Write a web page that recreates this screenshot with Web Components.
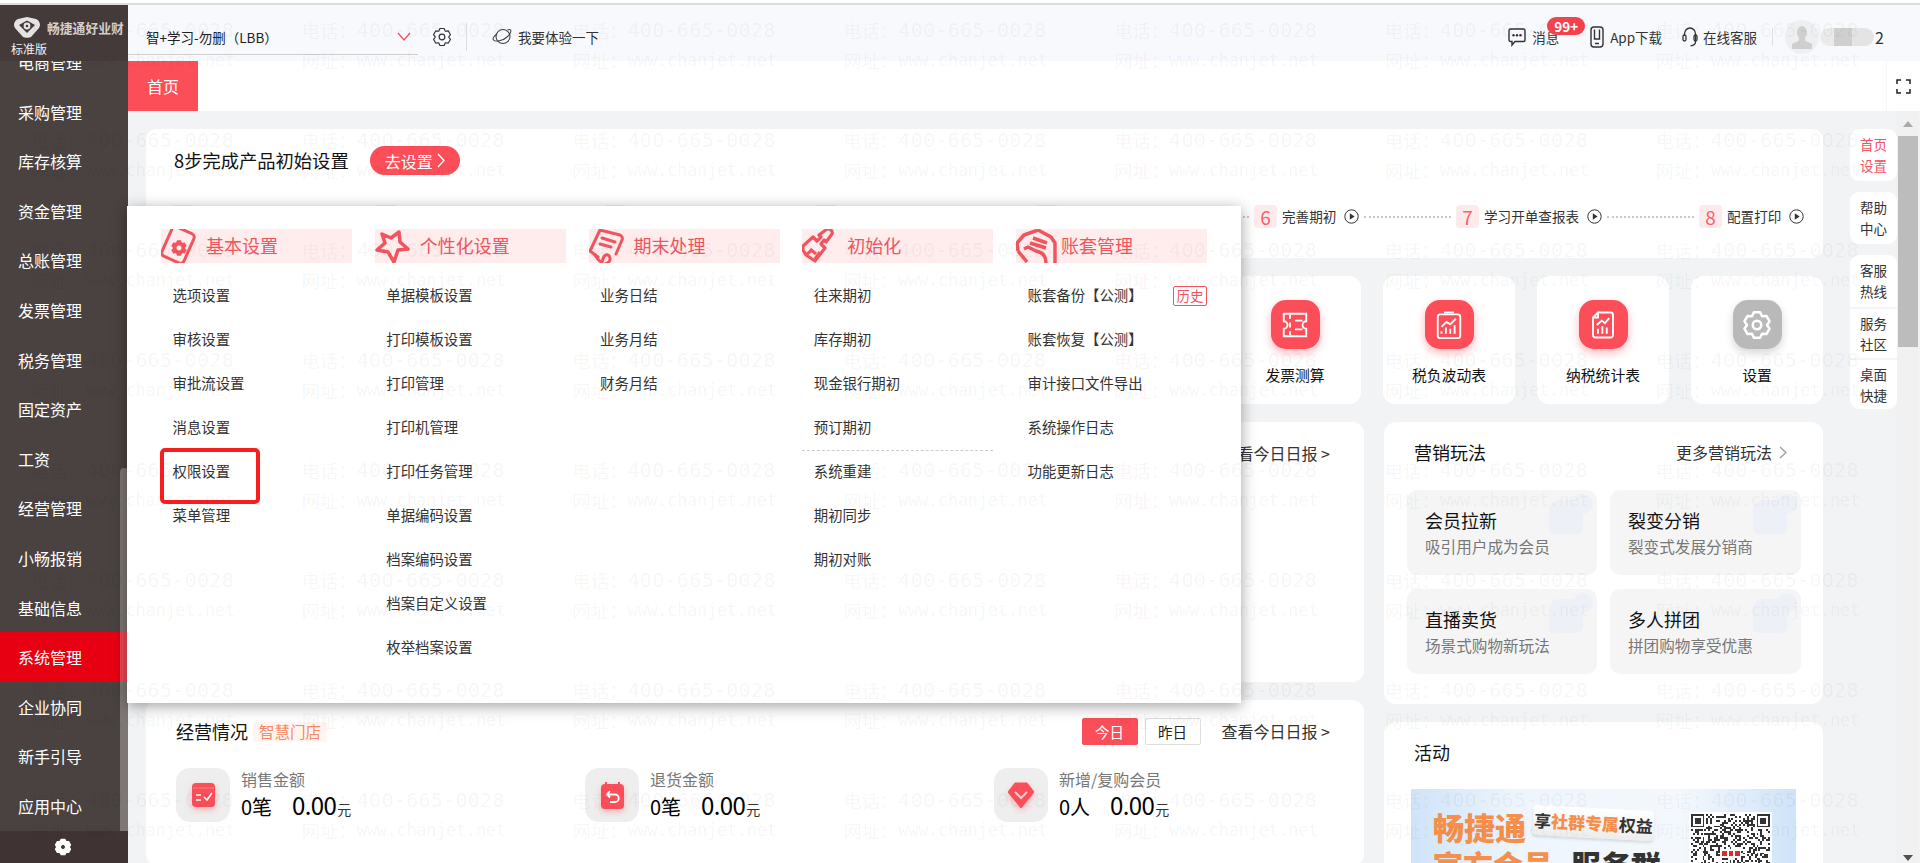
<!DOCTYPE html>
<html lang="zh-CN">
<head>
<meta charset="utf-8">
<title>畅捷通好业财</title>
<style>
  html, body { margin: 0; height: 863px; overflow: hidden; background: #f2f3f5; }
  body { font-family: "Noto Sans CJK SC", "Liberation Sans", sans-serif; color: #333; }
</style>
</head>
<body>
<app-shell></app-shell>

<script>
const RED = "#fb4e58";
const TITLE_RED = "#f0555f";

// six lobed cog, the same shape is used in the header, the tool card and the sidebar
function cogPath(cx, cy, outer, inner) {
  let d = "";
  for (let i = 0; i < 6; i++) {
    const a = (Math.PI / 3) * i - Math.PI / 2;
    const pts = [[outer, a - 0.24], [outer, a + 0.24], [inner, a + Math.PI / 6]];
    pts.forEach(([r, t], j) => {
      const x = (cx + r * Math.cos(t)).toFixed(2);
      const y = (cy + r * Math.sin(t)).toFixed(2);
      d += (i === 0 && j === 0 ? "M" : " L") + x + " " + y;
    });
  }
  return d + " Z";
}

function cogSvg(size, color, stroke) {
  return `<svg width="${size}" height="${size}" viewBox="0 0 24 24" fill="none" stroke="${color}"
    stroke-width="${stroke}" stroke-linejoin="round"><path d="${cogPath(12, 12, 10.5, 8)}"/><circle cx="12" cy="12" r="3.4"/></svg>`;
}

class SideNav extends HTMLElement {
  constructor() {
    super();
    this.attachShadow({ mode: "open" });
  }

  connectedCallback() {
    const items = ["电商管理", "采购管理", "库存核算", "资金管理", "总账管理", "发票管理", "税务管理", "固定资产",
      "工资", "经营管理", "小畅报销", "基础信息", "系统管理", "企业协同", "新手引导", "应用中心"];

    this.shadowRoot.innerHTML = `
      <style>
        :host { display: flex; flex-direction: column; width: 128px; height: 858px; background: #4a4240; color: #fff; position: relative; }
        .brand { height: 56px; background: #453a3a; position: relative; z-index: 1; padding: 12px 0 0 11px; box-sizing: border-box; flex: none; }
        .logo { display: flex; align-items: center; gap: 6px; margin-left: 2px; height: 20px; color: #d4d0d0; font-size: 12.8px; font-weight: 700; white-space: nowrap; }
        .edition { font-size: 12px; line-height: 14px; margin-top: 5px; color: #f2f2f2; }
        nav { flex: 1; overflow: hidden; position: relative; }
        ul { list-style: none; margin: -24px 0 0; padding: 0; }
        li { height: 49.6px; line-height: 51px; padding-left: 18px; font-size: 16px; }
        li.active { background: #e60012; }
        .thumb { position: absolute; right: 0; top: 407px; width: 8px; height: 363px; background: rgba(255,255,255,.28); border-radius: 4px 4px 0 0; }
        .foot { height: 32px; flex: none; background: #3f3333; display: flex; align-items: center; justify-content: center; padding-right: 2px; }
      </style>
      <div class="brand">
        <div class="logo">
          <svg width="28" height="21" viewBox="0 0 28 21" fill="#e6e3e3">
            <path d="M14 0 L23 2 C27 4 28 8 26 11 L18 20 C16 21 12 21 10 20 L2 11 C0 8 1 4 5 2 Z M14 3.500 L6 8 L14 16 L22 8 Z" fill-rule="evenodd"/>
            <circle cx="14" cy="9" r="3.400"/><circle cx="14" cy="9" r="1.300" fill="#453a3a"/>
          </svg>
          <span>畅捷通好业财</span>
        </div>
        <div class="edition">标准版</div>
      </div>
      <nav>
        <ul>${items.map(t => `<li class="${t === "系统管理" ? "active" : ""}">${t}</li>`).join("")}</ul>
        <div class="thumb"></div>
      </nav>
      <div class="foot">
        <svg width="18" height="18" viewBox="0 0 24 24" fill="#fff" fill-rule="evenodd" stroke="#fff" stroke-width="1.500" stroke-linejoin="round">
          <path d="${cogPath(12, 12, 10.500, 8.500)} M12 8.600 a3.400 3.400 0 1 0 .01 0 Z"/>
        </svg>
      </div>`;
  }
}

class TopBar extends HTMLElement {
  constructor() {
    super();
    this.attachShadow({ mode: "open" });
  }

  connectedCallback() {
    this.shadowRoot.innerHTML = `
      <style>
        :host { display: flex; align-items: center; height: 56px; box-sizing: border-box; padding-top: 8px; background: #f7f9fd; font-size: 13.5px; color: #333; }
        .select { width: 290px; height: 50px; box-sizing: border-box; align-self: flex-start; margin-top: -8px; padding: 14px 7px 0 18px; border-bottom: 1px solid #cfcfcf; display: flex; align-items: center; justify-content: space-between; color: #222; white-space: nowrap; }
        .gear { margin-left: 14px; display: flex; }
        .sep { width: 1px; height: 28px; background: #dcdde0; }
        .try { margin-left: 25px; margin-right: 6px; display: flex; }
        .right { margin-left: auto; display: flex; align-items: center; height: 100%; }
        .act { display: flex; align-items: center; gap: 6px; position: relative; white-space: nowrap; }
        .badge { position: absolute; left: 39px; top: -10px; height: 18px; width: 38px; border-radius: 9px; background: #f4434e; color: #fff; font-size: 13.500px; line-height: 18px; font-weight: 700; text-align: center; }
        .user { display: flex; align-items: center; margin-left: 12px; margin-right: 36px; }
        .avatar { width: 34px; height: 34px; border-radius: 50%; background: #eeeff1; display: flex; align-items: center; justify-content: center; }
        .blur { width: 54px; height: 18px; margin-left: 1px; border-radius: 9px; background: linear-gradient(90deg, #eaeaea 0 26%, #cfcfcf 26% 60%, #e4e4e4 60%); }
        .num { font-size: 16px; margin-left: 1px; }
      </style>
      <div class="select">
        <span>智+学习-勿删（LBB）</span>
        <svg width="14" height="9" viewBox="0 0 14 9" fill="none" stroke="${RED}" stroke-width="1.300"><path d="M1 1 L7 8 L13 1"/></svg>
      </div>
      <div class="gear">${cogSvg(20, "#333", 1.400)}</div>
      <div class="sep" style="margin-left:14px"></div>
      <div class="try">
        <svg width="20" height="18" viewBox="0 0 20 18" fill="none" stroke="#444" stroke-width="1.100">
          <circle cx="11" cy="8.500" r="7"/><path d="M5 6 C1.500 8 .5 11 1.500 12 C3 14 11 13 15 9 C18 6.500 19.500 3 18.500 2 C18 1.400 17 1.400 15.500 2"/>
        </svg>
      </div>
      <div>我要体验一下</div>
      <div class="right">
        <div class="act" style="margin-right:31px">
          <svg width="18" height="20" viewBox="0 0 18 20" fill="none" stroke="#333" stroke-width="1.400"><path d="M2.500 2 H15.500 A1.500 1.500 0 0 1 17 3.500 V13 A1.500 1.500 0 0 1 15.500 14.500 H7 L4 18 V14.500 H2.500 A1.500 1.500 0 0 1 1 13 V3.500 A1.500 1.500 0 0 1 2.500 2 Z"/><g fill="#333" stroke="none"><circle cx="5.500" cy="8.300" r="1.200"/><circle cx="9" cy="8.300" r="1.200"/><circle cx="12.500" cy="8.300" r="1.200"/></g></svg>
          <span>消息</span>
          <div class="badge">99+</div>
        </div>
        <div class="act" style="margin-right:20px">
          <svg width="14" height="22" viewBox="0 0 14 22" fill="none" stroke="#333" stroke-width="1.400"><rect x="1" y="1" width="12" height="20" rx="3"/><path d="M4.500 3.500 V13 H9.500 V3.500 M5 17.500 H9"/></svg>
          <span>App下载</span>
        </div>
        <div class="act" style="gap:5px;margin-right:15px">
          <svg width="16" height="22" viewBox="0 0 16 22" fill="none" stroke="#333" stroke-width="1.300"><path d="M2.500 10 V8 A5.500 6 0 0 1 13.500 8 V16 C13.500 18.500 11 19.500 8.500 19.800"/><rect x="1" y="9" width="3" height="6" rx="1.500"/><rect x="12" y="9" width="3" height="6" rx="1.500"/></svg>
          <span>在线客服</span>
        </div>
        <div class="sep" style="height:18px"></div>
        <div class="user">
          <div class="avatar">
            <svg width="22" height="24" viewBox="0 0 22 24" fill="#cfcfcf"><ellipse cx="11" cy="7.500" rx="5" ry="6.500"/><path d="M8 13 L7.500 16 L1 19 V24 H21 V19 L14.500 16 L14 13 Z"/></svg>
          </div>
          <div class="blur"></div>
          <div class="num">2</div>
        </div>
      </div>`;
  }
}

class TabStrip extends HTMLElement {
  constructor() {
    super();
    this.attachShadow({ mode: "open" });
  }

  connectedCallback() {
    this.shadowRoot.innerHTML = `
      <style>
        :host { display: flex; height: 50px; background: #fff; justify-content: space-between; }
        .tab { width: 70px; background: ${RED}; color: #fff; font-size: 16px; display: flex; align-items: center; justify-content: center; }
        .full { width: 34px; display: flex; align-items: center; justify-content: center; border-left: 1px solid #f7f7f7; box-sizing: border-box; }
      </style>
      <div class="tab">首页</div>
      <div class="full">
        <svg width="15" height="15" viewBox="0 0 15 15" fill="none" stroke="#222" stroke-width="1.500">
          <path d="M1 5 V1 H5 M10 1 H14 V5 M14 10 V14 H10 M5 14 H1 V10"/>
        </svg>
      </div>`;
  }
}

class SetupStep extends HTMLElement {
  constructor() {
    super();
    this.attachShadow({ mode: "open" });
  }

  connectedCallback() {
    const label = this.getAttribute("label");
    const play = `<svg class="play" width="15" height="15" viewBox="0 0 15 15" fill="none" stroke="#333" stroke-width="1">
      <circle cx="7.500" cy="7.500" r="6.700"/><path d="M5.800 4.300 L10.600 7.500 L5.800 10.700 Z" fill="#333" stroke="none"/></svg>`;

    this.shadowRoot.innerHTML = `
      <style>
        :host { display: flex; align-items: center; height: 23px; flex: none; }
        .no { width: 23px; height: 23px; flex: none; border-radius: 4px; background: #ffeaeb; color: #f9606a; font-size: 19px; line-height: 23px; text-align: center; }
        .text { margin: -2px 0 0 5px; font-size: 13.600px; color: #333; white-space: nowrap; }
        .play { margin-left: 8px; flex: none; }
        .dots { flex: 1; height: 0; margin: 0 5px; border-top: 2px dotted #c9c9c9; }
      </style>
      <div class="no">${this.getAttribute("no")}</div>
      ${label ? `<div class="text">${label}</div>${play}` : ""}
      ${this.hasAttribute("last") ? "" : `<div class="dots"></div>`}`;
  }
}

class SetupCard extends HTMLElement {
  constructor() {
    super();
    this.attachShadow({ mode: "open" });
  }

  connectedCallback() {
    this.shadowRoot.innerHTML = `
      <style>
        :host { display: block; height: 129px; box-sizing: border-box; background: #fff; border-radius: 10px; padding: 17px 20px 0 25px; }
        .head { display: flex; align-items: center; height: 29px; padding-left: 3px; font-size: 18.300px; color: #111; }
        .head > span { margin-top: -2px; }
        .go { margin-left: 21px; width: 90px; height: 29px; border-radius: 15px; background: ${RED}; color: #fff; font-size: 16px; display: flex; align-items: center; justify-content: center; gap: 4px; }
        .steps { display: flex; margin-top: 30px; }
      </style>
      <div class="head">
        <span>8步完成产品初始设置</span>
        <div class="go"><span>去设置</span>
          <svg width="8" height="15" viewBox="0 0 8 15" fill="none" stroke="#fff" stroke-width="1.400"><path d="M1 1 L7 7.500 L1 14"/></svg>
        </div>
      </div>
      <div class="steps">
        <setup-step no="1" style="width:204px"></setup-step>
        <setup-step no="2" style="width:229px"></setup-step>
        <setup-step no="3" style="width:211px"></setup-step>
        <setup-step no="4" style="width:220px"></setup-step>
        <setup-step no="5" style="width:219px"></setup-step>
        <setup-step no="6" label="完善期初" style="width:202px"></setup-step>
        <setup-step no="7" label="学习开单查报表" style="width:243px"></setup-step>
        <setup-step no="8" label="配置打印" last></setup-step>
      </div>`;
  }
}

const TOOL_ICONS = {
  ticket: `<path d="M3 3 H21 V9 A3 3 0 0 0 21 15 V21 H3 V15 A3 3 0 0 0 3 9 Z"/><path d="M8 4 V7 M8 10 V14 M8 17 V20 M12 8.500 H18 M12 15.500 H18" />`,
  board: `<rect x="3" y="3.500" width="18" height="19" rx="2"/><path d="M8 2 H16"/><path d="M6 19 V17 M9.500 19 V14 M13 19 V15 M16.500 19 V12 M6 13.500 L10 9.500 L13 11.500 L17.500 7"/>`,
  report: `<path d="M8 2 H18 A2 2 0 0 1 20 4 V20 A2 2 0 0 1 18 22 H6 A2 2 0 0 1 4 20 V6 Z M8 2 V6 H4"/><path d="M8 19 V15 M11.500 19 V13 M15 19 V14 M7 12 L11 8.500 L13.500 10.500 L17 6.500"/>`
};

class ToolCard extends HTMLElement {
  constructor() {
    super();
    this.attachShadow({ mode: "open" });
  }

  connectedCallback() {
    const icon = this.getAttribute("icon");
    const grey = icon === "cog";
    const glyph = grey
      ? cogSvg(30, "#fff", 2)
      : `<svg width="30" height="30" viewBox="0 0 24 24" fill="none" stroke="#fff" stroke-width="1.500">${TOOL_ICONS[icon]}</svg>`;

    this.shadowRoot.innerHTML = `
      <style>
        :host { display: block; width: 132px; height: 128px; flex: none; box-sizing: border-box; background: #fff; border-radius: 12px; padding-top: 24px; text-align: center; font-size: 14.800px; color: #111; }
        .ic { width: 49px; height: 49px; margin: 0 auto; border-radius: 15px; display: flex; align-items: center; justify-content: center;
          background: ${grey ? "#b9b9b9" : RED}; box-shadow: 0 4px 9px ${grey ? "rgba(0,0,0,.16)" : "rgba(251,78,88,.4)"}; }
        .lb { margin-top: 15px; line-height: 22px; }
      </style>
      <div class="ic">${glyph}</div>
      <div class="lb"><slot></slot></div>`;
  }
}

class ReportCard extends HTMLElement {
  constructor() {
    super();
    this.attachShadow({ mode: "open" });
  }

  connectedCallback() {
    this.shadowRoot.innerHTML = `
      <style>
        :host { display: block; height: 260px; background: #fff; border-radius: 12px; box-sizing: border-box; padding: 20px 34px 0 0; text-align: right; font-size: 16px; line-height: 22px; }
      </style>
      查看今日日报 &gt;`;
  }
}

const STAT_ICONS = {
  sale: `<svg width="23" height="24" viewBox="0 0 23 24"><path d="M4 0 H19 A4 4 0 0 1 23 4 V20 A4 4 0 0 1 19 24 H4 A4 4 0 0 1 0 20 V4 A4 4 0 0 1 4 0 Z" fill="${RED}"/><path d="M1 5 H22" stroke="#f8838a" stroke-width="1"/><path d="M4 12 H9 M4 17 H9 M12 14 L15 17 L20 10" stroke="#fff" stroke-width="1.600" fill="none"/></svg>`,
  back: `<svg width="23" height="27" viewBox="0 0 23 27"><path d="M5 0 V3 M18 0 V3" stroke="${RED}" stroke-width="2"/><rect y="2" width="23" height="25" rx="4" fill="${RED}"/><path d="M9 9 L6 12.500 L9 15.500 M6 12.500 H14 A3.500 3.500 0 0 1 14 20 H9" stroke="#fff" stroke-width="1.800" fill="none"/></svg>`,
  gem: `<svg width="26" height="26" viewBox="0 0 26 26"><path d="M7 1 H19 L26 10 L13 26 L0 10 Z" fill="${RED}" stroke="${RED}" stroke-linejoin="round"/><path d="M7 10 L13 16 L19 10" stroke="#fbd3d6" stroke-width="2" fill="none"/></svg>`
};

class StatItem extends HTMLElement {
  constructor() {
    super();
    this.attachShadow({ mode: "open" });
  }

  connectedCallback() {
    this.shadowRoot.innerHTML = `
      <style>
        :host { display: flex; gap: 11px; height: 54px; }
        .box { width: 54px; height: 54px; flex: none; border-radius: 14px; background: #eeeeee; display: flex; align-items: center; justify-content: center; }
        .box svg { filter: drop-shadow(0 3px 3px rgba(251,78,88,.35)); }
        .lb { font-size: 16px; line-height: 24px; color: #777; white-space: nowrap; margin-top: -1px; }
        .val { display: flex; align-items: baseline; line-height: 28px; color: #000; white-space: nowrap; }
        .cnt { font-size: 20px; width: 51px; }
        .amt { font-size: 24px; letter-spacing: -.6px; }
        .unit { font-size: 14px; color: #333; margin-left: 1px; }
      </style>
      <div class="box">${STAT_ICONS[this.getAttribute("icon")]}</div>
      <div>
        <div class="lb">${this.getAttribute("label")}</div>
        <div class="val"><span class="cnt">${this.getAttribute("count")}</span><span class="amt">0.00</span><span class="unit">元</span></div>
      </div>`;
  }
}

class BusinessCard extends HTMLElement {
  constructor() {
    super();
    this.attachShadow({ mode: "open" });
  }

  connectedCallback() {
    this.shadowRoot.innerHTML = `
      <style>
        :host { display: block; height: 166px; background: #fff; border-radius: 12px; box-sizing: border-box; padding: 18px 34px 0 30px; }
        .head { display: flex; align-items: center; height: 27px; }
        .title { font-size: 18px; color: #111; margin-top: -2px; }
        .tag { margin-left: 5px; height: 20px; line-height: 19px; padding: 0 6px; font-size: 15.500px; color: #f68a64; background: #fff4ef; border-radius: 2px; white-space: nowrap; }
        .btn { width: 56px; height: 27px; box-sizing: border-box; line-height: 25px; text-align: center; font-size: 14.500px; border-radius: 2px; border: 1px solid #dedede; color: #222; }
        .btn.on { margin-left: auto; background: ${RED}; border-color: ${RED}; color: #fff; margin-right: 7px; }
        .more { margin-left: 21px; font-size: 16px; color: #333; white-space: nowrap; margin-top: -1px; }
        .stats { display: grid; grid-template-columns: repeat(3, 409px); margin-top: 23px; }
      </style>
      <div class="head">
        <div class="title">经营情况</div>
        <div class="tag">智慧门店</div>
        <div class="btn on">今日</div>
        <div class="btn">昨日</div>
        <div class="more">查看今日日报 &gt;</div>
      </div>
      <div class="stats">
        <stat-item icon="sale" label="销售金额" count="0笔"></stat-item>
        <stat-item icon="back" label="退货金额" count="0笔"></stat-item>
        <stat-item icon="gem" label="新增/复购会员" count="0人"></stat-item>
      </div>`;
  }
}

class PromoTile extends HTMLElement {
  constructor() {
    super();
    this.attachShadow({ mode: "open" });
  }

  connectedCallback() {
    this.shadowRoot.innerHTML = `
      <style>
        :host { display: block; position: relative; height: 85px; box-sizing: border-box; padding: 18px 0 0 18px; background: #f5f5f5; border-radius: 10px; overflow: hidden; }
        .t { font-size: 18px; line-height: 24px; color: #111; position: relative; }
        .s { font-size: 15.600px; line-height: 24px; margin-top: 2px; color: #777; position: relative; white-space: nowrap; }
        svg { position: absolute; right: 2px; top: 2px; }
      </style>
      <svg width="46" height="44" viewBox="0 0 46 44" fill="#edf0f6">
        <path d="M10 8 H28 A6 6 0 0 1 34 14 V36 A6 6 0 0 1 28 42 H6 A6 6 0 0 1 0 36 V18 A10 10 0 0 1 10 8 Z"/><circle cx="34" cy="12" r="10"/>
      </svg>
      <div class="t">${this.getAttribute("title")}</div>
      <div class="s">${this.getAttribute("sub")}</div>`;
  }
}

class PromoCard extends HTMLElement {
  constructor() {
    super();
    this.attachShadow({ mode: "open" });
  }

  connectedCallback() {
    this.shadowRoot.innerHTML = `
      <style>
        :host { display: block; height: 282px; box-sizing: border-box; background: #fff; border-radius: 12px; padding: 18px 22px 0 23px; }
        .head { display: flex; justify-content: space-between; align-items: center; height: 24px; padding: 0 14px 0 7px; font-size: 18px; color: #111; }
        .more { display: flex; align-items: center; gap: 7px; font-size: 16px; color: #333; }
        .grid { display: grid; grid-template-columns: 190px 191px; gap: 14px 13px; margin-top: 26px; }
      </style>
      <div class="head">
        <span>营销玩法</span>
        <span class="more">更多营销玩法
          <svg width="8" height="13" viewBox="0 0 8 13" fill="none" stroke="#999" stroke-width="1.200"><path d="M1 1 L7 6.500 L1 12"/></svg>
        </span>
      </div>
      <div class="grid">
        <promo-tile title="会员拉新" sub="吸引用户成为会员"></promo-tile>
        <promo-tile title="裂变分销" sub="裂变式发展分销商"></promo-tile>
        <promo-tile title="直播卖货" sub="场景式购物新玩法"></promo-tile>
        <promo-tile title="多人拼团" sub="拼团购物享受优惠"></promo-tile>
      </div>`;
  }
}

class QrCode extends HTMLElement {
  constructor() {
    super();
    this.attachShadow({ mode: "open" });
  }

  connectedCallback() {
    const n = 41;
    let seed = 77;
    let cells = "";
    const inFinder = (x, y) => (x < 8 && y < 8) || (x > n - 9 && y < 8) || (x < 8 && y > n - 9);

    for (let y = 0; y < n; y++) {
      for (let x = 0; x < n; x++) {
        seed = (seed * 1103515245 + 12345) & 0x7fffffff;
        if (!inFinder(x, y) && (seed >> 16) % 5 < 2) cells += `<rect x="${x}" y="${y}" width="1" height="1"/>`;
      }
    }

    const finder = (x, y) => `<path d="M${x} ${y} h7 v7 h-7 Z M${x + 1} ${y + 1} v5 h5 v-5 Z" fill-rule="evenodd"/><rect x="${x + 2}" y="${y + 2}" width="3" height="3"/>`;

    this.shadowRoot.innerHTML = `
      <style>
        :host { display: block; width: 83px; height: 83px; background: #fff; padding: 2px; box-sizing: border-box; }
      </style>
      <svg width="79" height="79" viewBox="0 0 41 41" fill="#333" shape-rendering="crispEdges">
        ${cells}${finder(0, 0)}${finder(34, 0)}${finder(0, 34)}
        <rect x="15" y="18" width="11" height="5" fill="#fff"/>
        <g fill="#e02a2a"><rect x="16" y="19" width="2.500" height="3"/><rect x="19.500" y="19" width="2.500" height="3"/><rect x="23" y="19" width="2.500" height="3"/></g>
      </svg>`;
  }
}

class ActivityCard extends HTMLElement {
  constructor() {
    super();
    this.attachShadow({ mode: "open" });
  }

  connectedCallback() {
    this.shadowRoot.innerHTML = `
      <style>
        :host { display: block; height: 160px; box-sizing: border-box; background: #fff; border-radius: 12px 12px 0 0; padding: 18px 27px 0 27px; }
        .title { font-size: 18px; line-height: 24px; color: #111; padding-left: 3px; }
        .banner { display: flex; margin-top: 25px; height: 130px; box-sizing: border-box; padding: 19px 0 0 22px; background: linear-gradient(90deg, #cfe4f8 0, #eef5fc 28%, #f4f8fd 70%, #cfe3f9 100%); overflow: hidden; }
        .copy { width: 256px; flex: none; font-weight: 900; white-space: nowrap; }
        .brand { display: flex; font-size: 31px; line-height: 38px; color: #f58f4b; }
        .pill { margin: 0 0 0 7px; height: 30px; width: 121px; font-size: 17px; line-height: 30px; text-align: center; font-weight: 700; color: #333; background: linear-gradient(#fff, #ececec); border-radius: 4px; transform: rotate(3deg); box-shadow: 0 2px 3px rgba(0,0,0,.12); }
        .pill b { color: #f58f4b; }
        .sub { font-size: 30px; line-height: 36px; margin-top: 0; color: #f58f4b; }
        .sub i { font-style: normal; color: #333; margin-left: 18px; }
        qr-code { margin: 4px 0 0 0; }
      </style>
      <div class="title">活动</div>
      <div class="banner">
        <div class="copy">
          <div class="brand"><span>畅捷通</span><div class="pill">享<b>社群专属</b>权益</div></div>
          <div class="sub">官方会员<i>服务群</i></div>
        </div>
        <qr-code></qr-code>
      </div>`;
  }
}

class SideRail extends HTMLElement {
  constructor() {
    super();
    this.attachShadow({ mode: "open" });
  }

  connectedCallback() {
    this.shadowRoot.innerHTML = `
      <style>
        :host { display: flex; flex-direction: column; gap: 11px; width: 47px; flex: none; font-size: 13.500px; line-height: 21px; color: #333; text-align: center; position: relative; z-index: 1; }
        .sec { background: #fff; border-radius: 9px; overflow: hidden; }
        .it { height: 52px; box-sizing: border-box; padding-top: 5px; }
        .it + .it { height: 51px; padding-top: 4px; border-top: 2px solid #f5f5f5; }
        .on { color: ${TITLE_RED}; }
      </style>
      <div class="sec"><div class="it on">首页<br>设置</div></div>
      <div class="sec"><div class="it">帮助<br>中心</div></div>
      <div class="sec">
        <div class="it">客服<br>热线</div>
        <div class="it">服务<br>社区</div>
        <div class="it">桌面<br>快捷</div>
      </div>`;
  }
}

class PageScroll extends HTMLElement {
  constructor() {
    super();
    this.attachShadow({ mode: "open" });
  }

  connectedCallback() {
    this.shadowRoot.innerHTML = `
      <style>
        :host { display: flex; flex-direction: column; align-items: center; width: 23px; margin-left: -1px; flex: none; background: #f1f1f1; height: 100%; }
        .up, .down { width: 0; height: 0; border-left: 5.500px solid transparent; border-right: 5.500px solid transparent; }
        .up { margin-top: 10px; border-bottom: 6px solid #a9a9a9; }
        .thumb { width: 20px; height: 211px; background: #bcbcbc; margin-top: 9px; }
        .down { margin-top: auto; margin-bottom: 2px; border-top: 6px solid #505050; }
      </style>
      <div class="up"></div>
      <div class="thumb"></div>
      <div class="down"></div>`;
  }
}

const MENU = [
  {
    title: "基本设置",
    icon: `<rect x="5" y="0" width="24" height="32" rx="4" fill="none" stroke-width="3" transform="rotate(24 17 16)"/>
      <path fill-rule="evenodd" stroke="none" d="${cogPath(18, 19, 8, 6)} M18 16.500 a2.500 2.500 0 1 0 .01 0 Z"/>`,
    items: ["选项设置", "审核设置", "审批流设置", "消息设置", "权限设置", "菜单管理"]
  },
  {
    title: "个性化设置",
    icon: `<path fill="none" stroke-width="3.500" stroke-linejoin="round" d="M24 3 L25 13 L33 20 L23 21 L19 33 L13 23 L2 21 L10 14 L7 5 L16 9 Z"/>`,
    items: ["单据模板设置", "打印模板设置", "打印管理", "打印机管理", "打印任务管理", "单据编码设置", "档案编码设置", "档案自定义设置", "枚举档案设置"]
  },
  {
    title: "期末处理",
    icon: `<g fill="none" stroke-width="3" stroke-linejoin="round" stroke-linecap="round">
        <path d="M9 28 L1 22 L11 1 L31 6 C33 7 34 9 33 11 L27 25"/><path d="M13 9 L26 13 M11 15 L22 18"/>
        <path d="M6 26 C9 31 13 36 14 30 C15 25 20 24 21 29 C22 33 17 35 15 35"/></g>`,
    items: ["业务日结", "业务月结", "财务月结"]
  },
  {
    title: "初始化",
    icon: `<g fill="none" stroke-width="3.200" stroke-linejoin="round" transform="translate(0 -1)">
        <path d="M1 18 L11 9 L15 13 L19 9 L17 7 L25 1 C28 0 31 3 30 6 L24 14 L22 12 L19 16 L23 20 L13 33 L4 27 L1 22 Z"/>
        <path d="M8 21 L14 26 M5 26 L10 22 M13 31 L18 24"/></g>`,
    items: ["往来期初", "库存期初", "现金银行期初", "预订期初", "系统重建", "期初同步", "期初对账"],
    rule: 4
  },
  {
    title: "账套管理",
    icon: `<g fill="none" stroke-width="3.500" stroke-linejoin="round">
        <path d="M2 22 L1 14 L8 6 L22 1 L35 8 L39 14 V34"/><path d="M2 22 L11 33"/>
        <path d="M30 34 C30 26 26 23 20 22 L12 18 L8 20"/>
        <path d="M17 9 L31 14 M14 14 L30 19"/></g>`,
    items: ["账套备份【公测】", "账套恢复【公测】", "审计接口文件导出", "系统操作日志", "功能更新日志"],
    history: true
  }
];

class SettingMenu extends HTMLElement {
  constructor() {
    super();
    this.attachShadow({ mode: "open" });
  }

  connectedCallback() {
    const cols = MENU.map(col => `
      <section>
        <h3><svg width="42" height="34" viewBox="0 0 42 34" stroke="${TITLE_RED}" fill="${TITLE_RED}">${col.icon}</svg><span>${col.title}</span></h3>
        <ul>${col.items.map((t, i) => `
          <li class="${col.rule === i ? "rule" : ""}">${t}
            ${t === "权限设置" ? `<div class="mark"></div>` : ""}
            ${col.history && i === 0 ? `<div class="hist">历史</div>` : ""}
          </li>`).join("")}</ul>
      </section>`).join("");

    this.shadowRoot.innerHTML = `
      <style>
        :host { display: grid; grid-template-columns: repeat(5, 191px); column-gap: 22.750px; align-content: start; box-sizing: border-box; background: #fff; box-shadow: 0 3px 14px rgba(0,0,0,.38); padding: 23px 0 0 34px; }
        h3 { margin: 0; height: 34px; background: #ffecec; overflow: hidden; display: flex; align-items: center; font-weight: 400; font-size: 18px; color: ${TITLE_RED}; }
        h3 svg { flex: none; margin-right: 3px; }
        h3 span { margin-top: -2px; }
        ul { list-style: none; margin: 10px 0 0; padding: 0 0 0 11.500px; }
        li { height: 44px; line-height: 44px; font-size: 14.400px; color: #333; position: relative; white-space: nowrap; }
        li.rule::before { content: ""; position: absolute; left: -11.500px; right: 0; top: 1px; border-top: 1px dashed #ccc; }
        .mark { position: absolute; left: -13px; top: -1px; width: 100px; height: 56px; box-sizing: border-box; border: 4px solid #f81e1e; border-radius: 5px; }
        .hist { position: absolute; right: 0; top: 13px; width: 34px; height: 20px; box-sizing: border-box; line-height: 17px; text-align: center; font-size: 13.500px; color: ${TITLE_RED}; border: 1px solid ${TITLE_RED}; border-radius: 2px; }
      </style>
      ${cols}`;
  }
}

class WaterMark extends HTMLElement {
  constructor() {
    super();
    this.attachShadow({ mode: "open" });
  }

  connectedCallback() {
    let tiles = "";
    for (let r = 0; r < 8; r++) {
      for (let c = 0; c < 7; c++) {
        tiles += `<div class="tile"><div class="a"><span>电话：</span>400-665-0028</div><div class="b"><span>网址：</span>www.chanjet.net</div></div>`;
      }
    }
    this.shadowRoot.innerHTML = `
      <style>
        :host { position: absolute; inset: 0; pointer-events: none; overflow: hidden; z-index: 10; display: grid; grid-template-columns: repeat(7, 270.800px); grid-auto-rows: 110px; padding: 15px 0 0 31px; box-sizing: border-box; color: rgba(0,0,0,.05); white-space: nowrap; }
        .tile { height: 60px; }
        .a, .b { height: 30px; line-height: 30px; display: flex; font-family: "DejaVu Sans Mono", monospace; }
        span { font-family: "Noto Sans CJK SC", sans-serif; font-size: 18px; letter-spacing: .3px; }
        .a { font-size: 20px; letter-spacing: .3px; }
        .b { font-size: 17px; letter-spacing: -.3px; }
      </style>
      ${tiles}`;
  }
}

class AppShell extends HTMLElement {
  constructor() {
    super();
    this.attachShadow({ mode: "open" });
  }

  connectedCallback() {
    this.shadowRoot.innerHTML = `
      <style>
        :host { display: block; position: relative; width: 1920px; height: 863px; overflow: hidden; background: #f2f3f5; }
        .strip { height: 3px; background: #fff; border-bottom: 2px solid #dcdcdc; }
        .frame { display: flex; height: 858px; }
        .main { flex: 1; min-width: 0; display: flex; flex-direction: column; }
        .body { flex: 1; min-height: 0; display: flex; padding-left: 18px; }
        .dash { width: 1677px; flex: none; height: 100%; box-sizing: border-box; padding-top: 18px; overflow: hidden; }
        .tools { display: flex; justify-content: flex-end; gap: 22px; margin-top: 18px; }
        .cols { display: grid; grid-template-columns: 1218px 439px; column-gap: 20px; margin-top: 18px; }
        .col { display: flex; flex-direction: column; gap: 18px; }
        side-rail { margin: 18px 0 0 27px; }
        setting-menu { position: absolute; left: 127px; top: 206px; width: 1114px; height: 497px; z-index: 5; }
      </style>
      <div class="strip"></div>
      <div class="frame">
        <side-nav></side-nav>
        <div class="main">
          <top-bar></top-bar>
          <tab-strip></tab-strip>
          <div class="body">
            <div class="dash">
              <setup-card></setup-card>
              <div class="tools">
                <tool-card icon="ticket">发票测算</tool-card>
                <tool-card icon="board">税负波动表</tool-card>
                <tool-card icon="report">纳税统计表</tool-card>
                <tool-card icon="cog">设置</tool-card>
              </div>
              <div class="cols">
                <div class="col"><report-card></report-card><business-card></business-card></div>
                <div class="col"><promo-card></promo-card><activity-card></activity-card></div>
              </div>
            </div>
            <side-rail></side-rail>
            <page-scroll></page-scroll>
          </div>
        </div>
      </div>
      <setting-menu></setting-menu>
      <water-mark></water-mark>`;
  }
}

customElements.define("side-nav", SideNav);
customElements.define("top-bar", TopBar);
customElements.define("tab-strip", TabStrip);
customElements.define("setup-step", SetupStep);
customElements.define("setup-card", SetupCard);
customElements.define("tool-card", ToolCard);
customElements.define("report-card", ReportCard);
customElements.define("stat-item", StatItem);
customElements.define("business-card", BusinessCard);
customElements.define("promo-tile", PromoTile);
customElements.define("promo-card", PromoCard);
customElements.define("qr-code", QrCode);
customElements.define("activity-card", ActivityCard);
customElements.define("side-rail", SideRail);
customElements.define("page-scroll", PageScroll);
customElements.define("setting-menu", SettingMenu);
customElements.define("water-mark", WaterMark);
customElements.define("app-shell", AppShell);
</script>
</body>
</html>
